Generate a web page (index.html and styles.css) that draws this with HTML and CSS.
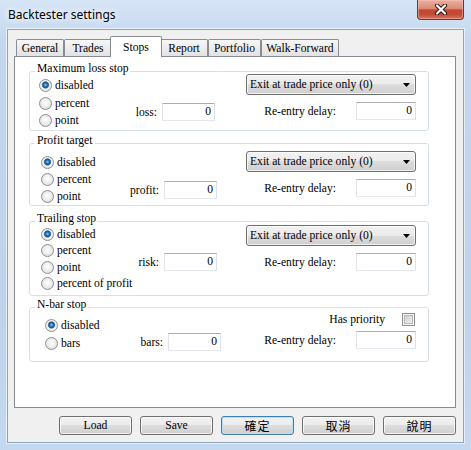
FILE: index.html
```html
<!DOCTYPE html>
<html>
<head>
<meta charset="utf-8">
<link rel="stylesheet" href="styles.css">
</head>
<body>
<div class="window">
  <div class="titlebar">
    <span class="title">Backtester settings</span>
    <div class="close">
      <svg width="14" height="11" viewBox="0 0 14 11">
        <path d="M3 1.5 L11 9.5 M11 1.5 L3 9.5" stroke="#3b1710" stroke-width="4.2" stroke-linecap="round"/>
        <path d="M3 1.5 L11 9.5 M11 1.5 L3 9.5" stroke="#ffffff" stroke-width="2.2" stroke-linecap="round"/>
      </svg>
    </div>
  </div>
  <div class="client">
    <div class="tabs">
      <div class="tab w48">General</div>
      <div class="tab w48">Trades</div>
      <div class="tab w48 sel">Stops</div>
      <div class="tab w48">Report</div>
      <div class="tab w53">Portfolio</div>
      <div class="tab w78">Walk-Forward</div>
    </div>
    <div class="panel">
      <div class="group g1">
        <div class="gtitle">Maximum loss stop</div>
        <div class="gbody">
          <div class="opts">
            <div class="opt"><span class="radio on"></span><span class="txt">disabled</span></div>
            <div class="opt"><span class="radio"></span><span class="txt">percent</span></div>
            <div class="opt"><span class="radio"></span><span class="txt">point</span></div>
          </div>
          <div class="mid"><span class="txt">loss:</span><div class="input">0</div></div>
          <div class="right">
            <div class="combo"><span class="txt">Exit at trade price only (0)</span><svg width="7" height="4" viewBox="0 0 7 4"><path d="M0 0 H7 L3.5 4 Z" fill="#000"/></svg></div>
            <div class="reentry"><span class="txt rlabel">Re-entry delay:</span><div class="input wide">0</div></div>
          </div>
        </div>
      </div>
      <div class="group g2">
        <div class="gtitle">Profit target</div>
        <div class="gbody">
          <div class="opts">
            <div class="opt"><span class="radio on"></span><span class="txt">disabled</span></div>
            <div class="opt"><span class="radio"></span><span class="txt">percent</span></div>
            <div class="opt"><span class="radio"></span><span class="txt">point</span></div>
          </div>
          <div class="mid"><span class="txt">profit:</span><div class="input">0</div></div>
          <div class="right">
            <div class="combo"><span class="txt">Exit at trade price only (0)</span><svg width="7" height="4" viewBox="0 0 7 4"><path d="M0 0 H7 L3.5 4 Z" fill="#000"/></svg></div>
            <div class="reentry"><span class="txt rlabel">Re-entry delay:</span><div class="input wide">0</div></div>
          </div>
        </div>
      </div>
      <div class="group g3">
        <div class="gtitle">Trailing stop</div>
        <div class="gbody">
          <div class="opts">
            <div class="opt"><span class="radio on"></span><span class="txt">disabled</span></div>
            <div class="opt"><span class="radio"></span><span class="txt">percent</span></div>
            <div class="opt"><span class="radio"></span><span class="txt">point</span></div>
            <div class="opt"><span class="radio"></span><span class="txt">percent of profit</span></div>
          </div>
          <div class="mid"><span class="txt">risk:</span><div class="input">0</div></div>
          <div class="right">
            <div class="combo"><span class="txt">Exit at trade price only (0)</span><svg width="7" height="4" viewBox="0 0 7 4"><path d="M0 0 H7 L3.5 4 Z" fill="#000"/></svg></div>
            <div class="reentry"><span class="txt rlabel">Re-entry delay:</span><div class="input wide">0</div></div>
          </div>
        </div>
      </div>
      <div class="group g4">
        <div class="gtitle">N-bar stop</div>
        <div class="gbody">
          <div class="opts">
            <div class="opt"><span class="radio on"></span><span class="txt">disabled</span></div>
            <div class="opt"><span class="radio"></span><span class="txt">bars</span></div>
          </div>
          <div class="mid"><span class="txt">bars:</span><div class="input">0</div></div>
          <div class="right">
            <div class="priority"><span class="txt plabel">Has priority</span><span class="check"></span></div>
            <div class="reentry"><span class="txt rlabel">Re-entry delay:</span><div class="input wide">0</div></div>
          </div>
        </div>
      </div>
    </div>
    <div class="buttons">
      <div class="btn">Load</div>
      <div class="btn">Save</div>
      <div class="btn default cjk">確定</div>
      <div class="btn cjk">取消</div>
      <div class="btn cjk">說明</div>
    </div>
  </div>
</div>
</body>
</html>
```

FILE: styles.css
```css
html, body {
  margin: 0;
  padding: 0;
}
body {
  width: 471px;
  height: 450px;
  overflow: hidden;
}
.window {
  width: 471px;
  height: 450px;
  box-sizing: border-box;
  font-family: "Liberation Serif", "Times New Roman", serif;
  font-size: 11.6px;
  color: #000;
  background: linear-gradient(#d6e5f6, #c3d8ef 40px, #bcd3ec 300px, #c4d9ef);
  display: flex;
  flex-direction: column;
}
.window * {
  font-family: "Liberation Serif", "Times New Roman", serif;
}
.tab, .gtitle, .txt, .input, .btn {
  font-family: "Liberation Serif", "Times New Roman", serif;
  font-size: 11.6px;
}
.titlebar {
  height: 29px;
  flex: none;
  display: flex;
  align-items: flex-start;
  justify-content: space-between;
}
.window .title {
  font-family: "Noto Sans", "DejaVu Sans", sans-serif;
  font-size: 12px;
  line-height: 16px;
  margin: 7px 0 0 8px;
  color: #000;
  text-shadow: 0 0 6px #fff, 0 0 10px #fff;
}
.close {
  width: 47px;
  height: 20px;
  box-sizing: border-box;
  margin-right: 7px;
  border: 1px solid #7a3224;
  border-top: none;
  border-radius: 0 0 4px 4px;
  background: linear-gradient(#eab0a2, #dc8a78 45%, #c8472f 52%, #c24a33 75%, #d9765e);
  box-shadow: inset 0 0 0 1px rgba(255, 200, 190, 0.45);
  display: flex;
  align-items: center;
  justify-content: center;
}
.client {
  width: 457px;
  height: 414px;
  box-sizing: border-box;
  margin: 0 7px;
  border: 1px solid #8fa3ba;
  box-shadow: 0 0 0 1px rgba(255, 255, 255, 0.6);
  background: #f0f0f0;
  padding: 6px 7px 0 6px;
  display: flex;
  flex-direction: column;
}
.tabs {
  height: 20px;
  flex: none;
  display: flex;
  align-items: flex-end;
  padding-left: 2px;
}
.tab {
  box-sizing: border-box;
  height: 17px;
  border: 1px solid #898c95;
  border-bottom: none;
  border-radius: 2px 2px 0 0;
  background: linear-gradient(#f7f7f7, #ececec 50%, #e2e2e2);
  display: flex;
  align-items: center;
  justify-content: center;
  flex: none;
}
.w48 { width: 48px; }
.w53 { width: 53px; }
.w78 { width: 78px; }
.tab.sel {
  width: 52px;
  height: 21px;
  margin: 0 -2px -1px -2px;
  background: #fff;
  position: relative;
  z-index: 1;
}
.panel {
  height: 352px;
  box-sizing: border-box;
  flex: none;
  border: 1px solid #898c95;
  background: #fff;
}
.group {
  width: 400px;
  box-sizing: border-box;
  border: 1px solid #d5dfe5;
  border-radius: 3px;
  margin-left: 14px;
}
.g1 { margin-top: 14px; height: 60px; }
.g2 { margin-top: 12px; height: 63px; }
.g3 { margin-top: 15px; height: 75px; }
.g4 { margin-top: 11px; height: 55px; }
.gtitle {
  width: max-content;
  height: 14px;
  line-height: 14px;
  margin: -10px 0 -4px 5px;
  padding: 0 2px;
  background: #fff;
}
.gbody {
  display: flex;
  align-items: flex-start;
}
.g1 .gbody { padding-left: 9px; }
.g2 .gbody, .g3 .gbody { padding-left: 11px; }
.g4 .gbody { padding-left: 15px; }
.opts {
  width: 96px;
  flex: none;
}
.opt {
  display: flex;
  align-items: center;
  white-space: nowrap;
  height: 17.5px;
}
.g1 .opts { padding-top: 5px; }
.g2 .opts { padding-top: 9.5px; }
.g2 .opt { height: 17px; }
.g3 .opts { padding-top: 4px; }
.g3 .opt { height: 16.5px; }
.g4 .opts { padding-top: 9px; }
.radio {
  width: 13px;
  height: 13px;
  box-sizing: border-box;
  flex: none;
  margin-right: 3px;
  border-radius: 50%;
  border: 1px solid #8e8f8f;
  background: radial-gradient(circle at 50% 45%, #fefefe 0, #f1f1f1 40%, #d2d2d2 100%);
}
.radio.on {
  background: radial-gradient(circle at 50% 45%, #9fd8fb 0, #2f83c6 1.4px, #164e88 2.8px, #6e93b3 3.4px, #e9eef2 4px, #f3f3f3 4.6px, #d2d2d2 100%);
}
.mid {
  width: 80px;
  flex: none;
  display: flex;
  justify-content: flex-end;
  align-items: center;
  gap: 5px;
}
.g1 .mid { padding-top: 31px; }
.g2 .mid { padding-top: 37px; }
.g3 .mid { padding-top: 31px; }
.g4 .mid { padding-top: 25px; }
.input {
  width: 53px;
  height: 18px;
  box-sizing: border-box;
  flex: none;
  border: 1px solid;
  border-color: #abadb3 #dbdfe6 #e3e9ef #e2e3ea;
  background: #fff;
  text-align: right;
  padding-right: 3px;
  line-height: 16px;
}
.input.wide { width: 60px; }
.right {
  width: 170px;
  flex: none;
  margin-left: auto;
  margin-right: 12px;
}
.g1 .right { padding-top: 2px; }
.g2 .right { padding-top: 7px; }
.g3 .right { padding-top: 3px; }
.g4 .right { padding-top: 4px; }
.combo {
  height: 21px;
  box-sizing: border-box;
  border: 1px solid #707070;
  border-radius: 3px;
  background: linear-gradient(#f2f2f2, #ebebeb 50%, #dddddd 50%, #cfcfcf);
  box-shadow: inset 0 0 0 1px rgba(255, 255, 255, 0.7);
  display: flex;
  align-items: center;
  justify-content: space-between;
  padding: 0 5px 0 3px;
  white-space: nowrap;
}
.reentry {
  display: flex;
  justify-content: flex-end;
  align-items: center;
  margin-top: 7px;
}
.g4 .reentry { margin-top: 5px; }
.rlabel { margin-right: 20px; }
.priority {
  height: 14px;
  display: flex;
  justify-content: flex-end;
  align-items: center;
}
.plabel { margin-right: 17px; }
.check {
  width: 13px;
  height: 13px;
  box-sizing: border-box;
  border: 1px solid #8e8f8f;
  background: linear-gradient(135deg, #c6c6c6, #e4e4e4 60%, #f2f2f2);
  box-shadow: inset 0 0 0 1px #f6f6f6, inset 0 0 0 2px #b9b9b9;
  margin-right: 1px;
}
.buttons {
  margin-top: 8px;
  display: flex;
  justify-content: flex-end;
  gap: 8px;
}
.btn {
  width: 73px;
  height: 19px;
  box-sizing: border-box;
  border: 1px solid #707070;
  border-radius: 3px;
  background: linear-gradient(#f2f2f2, #ebebeb 50%, #dddddd 50%, #cfcfcf);
  box-shadow: inset 0 0 0 1px rgba(255, 255, 255, 0.7);
  display: flex;
  align-items: center;
  justify-content: center;
}
.btn.default {
  border-color: #3c7fb1;
  box-shadow: inset 0 0 0 1px #b6e0f7;
}
.window .cjk {
  font-family: "Noto Sans CJK TC", "Noto Sans CJK SC", sans-serif;
  font-size: 12px;
  letter-spacing: 1px;
}
```
